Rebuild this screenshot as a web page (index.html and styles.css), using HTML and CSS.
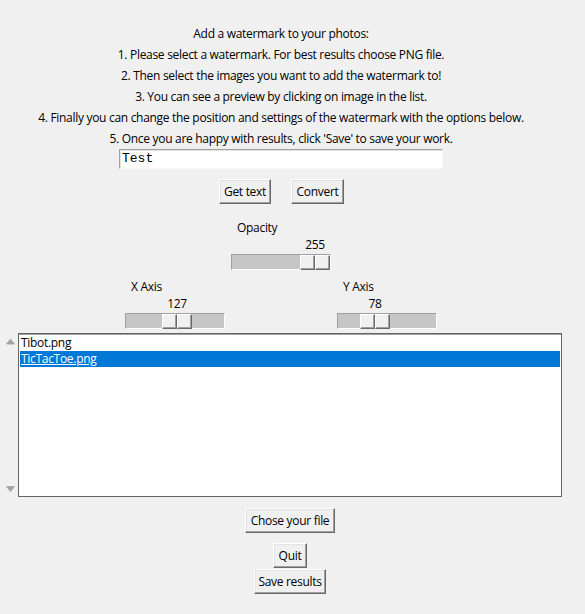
FILE: index.html
```html
<!DOCTYPE html>
<html lang="en">
<head>
<meta charset="utf-8">
<title>Watermark</title>
<link rel="stylesheet" href="styles.css">
</head>
<body>
<div class="app">
  <div class="main">
    <p class="line">Add a watermark to your photos:</p>
    <p class="line">1. Please select a watermark. For best results choose PNG file.</p>
    <p class="line">2. Then select the images you want to add the watermark to!</p>
    <p class="line">3. You can see a preview by clicking on image in the list.</p>
    <p class="line">4. Finally you can change the position and settings of the watermark with the options below.</p>
    <p class="line">5. Once you are happy with results, click 'Save' to save your work.</p>
    <div class="entry">Test</div>
    <div class="btn-row">
      <button class="btn btn-get">Get text</button>
      <button class="btn btn-convert">Convert</button>
    </div>
    <div class="scale scale-opacity">
      <div class="scale-label">Opacity</div>
      <div class="scale-value"><span class="value-text" style="left:69px">255</span></div>
      <div class="trough"><div class="slider" style="left:68px"><span class="half"></span><span class="half"></span></div></div>
    </div>
    <div class="scale-row">
      <div class="scale">
        <div class="scale-label">X Axis</div>
        <div class="scale-value"><span class="value-text" style="left:37px">127</span></div>
        <div class="trough"><div class="slider" style="left:36px"><span class="half"></span><span class="half"></span></div></div>
      </div>
      <div class="scale">
        <div class="scale-label">Y Axis</div>
        <div class="scale-value"><span class="value-text" style="left:23px">78</span></div>
        <div class="trough"><div class="slider" style="left:22px"><span class="half"></span><span class="half"></span></div></div>
      </div>
    </div>
    <div class="list-wrap">
      <div class="scrollbar">
        <svg class="arrow" width="18" height="8" viewBox="0 0 18 8"><polygon points="6.5,7 10.5,2 14.5,7" fill="#a3a3a3" stroke="#a3a3a3" stroke-width="0.8" stroke-linejoin="round"/></svg>
        <svg class="arrow" width="18" height="8" viewBox="0 0 18 8"><polygon points="6.5,1.5 10.5,6.5 14.5,1.5" fill="#a3a3a3" stroke="#a3a3a3" stroke-width="0.8" stroke-linejoin="round"/></svg>
      </div>
      <div class="listbox">
        <div class="item">Tibot.png</div>
        <div class="item selected">TicTacToe.png</div>
      </div>
    </div>
  </div>
  <div class="bottom">
    <button class="btn btn-chose">Chose your file</button>
    <button class="btn btn-quit">Quit</button>
    <button class="btn btn-save">Save results</button>
  </div>
</div>
</body>
</html>
```
FILE: styles.css
```css
html, body {
  margin: 0;
  padding: 0;
  background: #f0f0f0;
}
body {
  font-family: "Open Sans", "Noto Sans", sans-serif;
  font-size: 12px;
  letter-spacing: -0.3px;
  color: #000;
  width: 585px;
  height: 614px;
  overflow: hidden;
}
.app {
  display: flex;
  flex-direction: column;
}
.main {
  width: 562px;
  display: flex;
  flex-direction: column;
  align-items: center;
  padding-top: 23px;
}
.line {
  margin: 0;
  height: 21px;
  line-height: 21px;
  white-space: nowrap;
}
.entry {
  box-sizing: border-box;
  width: 324px;
  height: 20px;
  background: #fff;
  border-top: 1px solid #a0a0a0;
  border-left: 1px solid #a0a0a0;
  border-right: 1px solid #f8f8f8;
  border-bottom: 1px solid #f8f8f8;
  box-shadow: inset 1px 1px 0 #e3e3e3;
  font-family: "Liberation Mono", "DejaVu Sans Mono", monospace;
  font-size: 13px;
  letter-spacing: 0;
  line-height: 17px;
  padding-left: 2px;
}
.btn-row {
  display: flex;
  gap: 20px;
  margin-top: 10px;
  padding-left: 1px;
}
.btn {
  box-sizing: border-box;
  height: 25px;
  padding: 0;
  margin: 0;
  background: #f0f0f0;
  font-family: "Open Sans", "Noto Sans", sans-serif;
  font-size: 12px;
  letter-spacing: -0.3px;
  color: #000;
  border-top: 1px solid #ffffff;
  border-left: 1px solid #ffffff;
  border-right: 1px solid #696969;
  border-bottom: 1px solid #696969;
  box-shadow: inset -1px -1px 0 #a0a0a0, inset 1px 1px 0 #e3e3e3;
  line-height: 21px;
  text-align: center;
}
.btn-get { width: 52px; }
.btn-convert { width: 53px; }
.btn-chose { width: 90px; }
.btn-quit { width: 34px; }
.btn-save { width: 72px; }

.scale {
  width: 100px;
  display: flex;
  flex-direction: column;
}
.scale-opacity {
  margin-top: 15px;
}
.scale-label {
  height: 17px;
  line-height: 17px;
  padding-left: 6px;
}
.scale-value {
  position: relative;
  height: 17px;
  line-height: 17px;
}
.value-text {
  position: absolute;
  top: 0;
  width: 30px;
  text-align: center;
}
.trough {
  position: relative;
  box-sizing: border-box;
  margin-top: 1px;
  width: 100px;
  height: 16px;
  background: #c6c6c6;
  border-top: 1px solid #a0a0a0;
  border-left: 1px solid #a0a0a0;
  border-right: 1px solid #ffffff;
  border-bottom: 1px solid #ffffff;
}
.slider {
  position: absolute;
  top: 0;
  width: 30px;
  height: 15px;
  display: flex;
}
.half {
  box-sizing: border-box;
  width: 15px;
  height: 15px;
  background: #f0f0f0;
  border-top: 1px solid #ffffff;
  border-left: 1px solid #ffffff;
  border-right: 1px solid #696969;
  border-bottom: 1px solid #696969;
  box-shadow: inset -1px -1px 0 #a0a0a0;
}
.scale-row {
  display: flex;
  gap: 112px;
  margin-top: 8px;
}
.list-wrap {
  display: flex;
  width: 562px;
  margin-top: 4px;
  height: 164px;
}
.scrollbar {
  width: 18px;
  height: 164px;
  display: flex;
  flex-direction: column;
  justify-content: space-between;
  padding: 4px 0 4px 0;
  box-sizing: border-box;
}
.arrow {
  display: block;
}
.listbox {
  box-sizing: border-box;
  flex: 1;
  height: 164px;
  background: #fff;
  border: 1px solid #646464;
  box-shadow: inset 0 1px 0 #a0a0a0;
  padding: 1px 1px 1px 1px;
}
.item {
  height: 16px;
  line-height: 16px;
  padding-left: 1px;
  white-space: nowrap;
}
.item.selected {
  background: #0078d7;
  color: #fff;
  text-decoration: underline;
}
.bottom {
  width: 580px;
  display: flex;
  flex-direction: column;
  align-items: center;
  margin-top: 11px;
}
.btn-quit {
  margin-top: 10px;
}
.btn-save {
  margin-top: 1px;
}
```
